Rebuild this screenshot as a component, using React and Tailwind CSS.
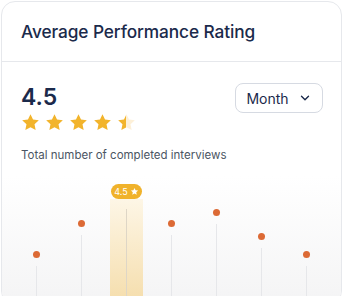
import { ChevronDown } from 'lucide-react'

const STAR = 'M12 2.5l2.9 6.1 6.6.8-4.9 4.6 1.3 6.6L12 17.3l-5.9 3.3 1.3-6.6-4.9-4.6 6.6-.8z'

function Star({ half = false, className = '' }) {
  return (
    <svg viewBox="0 0 24 24" className={className}>
      {half && (
        <defs>
          <linearGradient id="half-star" x1="0" x2="1" y1="0" y2="0">
            <stop offset="50%" stopColor="#f2b42c" />
            <stop offset="50%" stopColor="#fdf0d8" />
          </linearGradient>
        </defs>
      )}
      <path d={STAR} fill={half ? 'url(#half-star)' : '#f2b42c'} strokeLinejoin="round" />
    </svg>
  )
}

// dot centre, px from chart top; null = highlighted column
const points = [78, 47, null, 47, 36, 60, 78]

function Column({ y }) {
  if (y == null) {
    return (
      <div className="flex w-[45px] flex-col items-center">
        <div className="mt-[8px] flex h-[15px] w-[31px] items-center justify-center gap-[2px] rounded-full bg-[#f0b22b] text-[9px] leading-none text-white">
          <span>4.5</span>
          <svg viewBox="0 0 24 24" className="h-[9px] w-[9px]">
            <path d={STAR} fill="#fff" />
          </svg>
        </div>
        <div className="flex w-[33px] flex-1 justify-center bg-gradient-to-b from-[#fdf6e6] to-[#f5ddab] pt-[10px]">
          <div className="w-[1.5px] bg-[#ded6c6]" />
        </div>
      </div>
    )
  }
  return (
    <div className="flex w-[45px] flex-col items-center" style={{ paddingTop: y - 3.5 }}>
      <div className="h-[7px] w-[7px] rounded-full bg-[#dc6a35]" />
      <div className="mt-[8px] w-[1.5px] flex-1 bg-[#e6e7ea]" />
    </div>
  )
}

export default function App() {
  return (
    <div className="h-[296px] overflow-hidden bg-white pl-px pt-px" style={{ fontFamily: 'Inter, "Noto Sans", sans-serif' }}>
      <div className="w-[341px] overflow-hidden rounded-[14px] border border-[#e6e8ec] bg-white">
        <div className="flex h-[60px] items-center border-b border-[#e6e8ec] px-[19px]">
          <h2 className="text-[17.3px] font-medium tracking-[-0.1px] text-[#1b2a4b]">Average Performance Rating</h2>
        </div>

        <div className="px-[19px] pt-[21px]">
          <div className="flex items-start justify-between">
            <div>
              <div className="text-[23px] font-semibold leading-[28px] text-[#1b2a4b]">4.5</div>
              <div className="ml-[-1px] mt-[1px] flex gap-[3px]">
                <Star className="h-[21px] w-[21px]" />
                <Star className="h-[21px] w-[21px]" />
                <Star className="h-[21px] w-[21px]" />
                <Star className="h-[21px] w-[21px]" />
                <Star half className="h-[21px] w-[21px]" />
              </div>
            </div>
            <button className="mr-[-1px] flex h-[30px] w-[88px] items-center justify-center gap-[9px] rounded-[8px] border border-[#d6dae2] text-[14px] text-[#1b2a4b]">
              Month
              <ChevronDown className="h-[14px] w-[14px]" strokeWidth={2.4} />
            </button>
          </div>
          <p className="mt-[14px] text-[11.5px] text-[#4b5563]">Total number of completed interviews</p>
        </div>

        <div className="mt-[12px] flex h-[128px] bg-gradient-to-b from-white to-[#f4f4f5] px-[12px]">
          {points.map((y, i) => (
            <Column key={i} y={y} />
          ))}
        </div>
      </div>
    </div>
  )
}
